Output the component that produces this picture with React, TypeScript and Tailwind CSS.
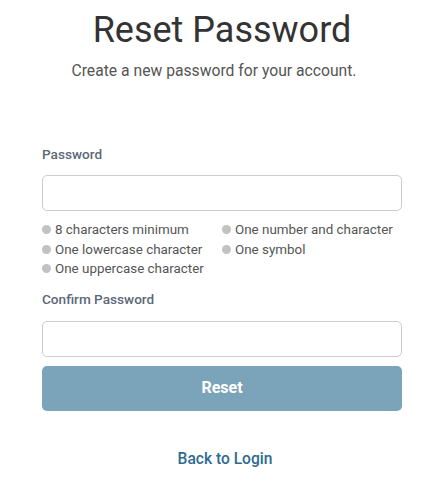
const rules = [
  "8 characters minimum",
  "One number and character",
  "One lowercase character",
  "One symbol",
  "One uppercase character",
]

function Rule({ text }: { text: string }) {
  return (
    <li className="flex items-center gap-1 text-[13.4px] leading-[19.5px] text-[#555555]">
      <span className="h-[9px] w-[9px] shrink-0 rounded-full bg-[#c2c2c2]" />
      {text}
    </li>
  )
}

export default function App() {
  return (
    <div className="min-h-screen bg-white font-['Roboto',sans-serif]">
      <div className="ml-[42px] w-[360px] pt-[9px]">
        <h1 className="text-center text-[36px] font-normal leading-[42px] text-[#333333]">
          Reset Password
        </h1>
        <p className="mt-2 pr-[16px] text-center text-[15.7px] leading-[24px] text-[#555555]">
          Create a new password for your account.
        </p>

        <form className="mt-[61px]" onSubmit={(e) => e.preventDefault()}>
          <label className="block text-[13.6px] font-medium leading-[20px] text-[#5b6878]">
            Password
          </label>
          <input
            type="password"
            className="mt-[11px] block h-[36px] w-full rounded-[5px] border border-[#cccccc] px-3 outline-none"
          />
          <ul className="mt-[9px] grid grid-cols-[180px_180px]">
            {rules.map((r) => (
              <Rule key={r} text={r} />
            ))}
          </ul>

          <label className="mt-[10px] block text-[13.6px] font-medium leading-[20px] text-[#5b6878]">
            Confirm Password
          </label>
          <input
            type="password"
            className="mt-[12px] block h-[36px] w-full rounded-[5px] border border-[#cccccc] px-3 outline-none"
          />
          <button
            type="submit"
            className="mt-[9px] flex h-[45px] w-full items-center justify-center rounded-[5px] bg-[#7ba3b9] text-[16px] font-bold text-white"
          >
            Reset
          </button>
        </form>

        <div className="mt-[36px] pl-[6px] text-center">
          <a
            href="#"
            className="text-[15.6px] font-medium leading-[24px] text-[#2f6a92]"
          >
            Back to Login
          </a>
        </div>
      </div>
    </div>
  )
}
